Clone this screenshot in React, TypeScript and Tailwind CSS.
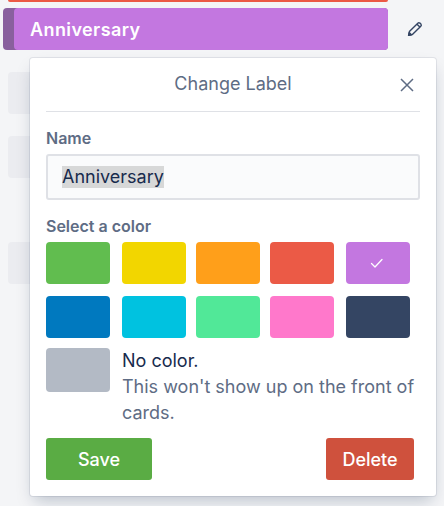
import React from "react";

const row1 = ["bg-[#61bd4f]", "bg-[#f2d600]", "bg-[#ff9f1a]", "bg-[#eb5a46]", "bg-[#c377e0]"];
const row2 = ["bg-[#0079bf]", "bg-[#00c2e0]", "bg-[#51e898]", "bg-[#ff78cb]", "bg-[#344563]"];
const gaps = ["", "ml-[12px]", "ml-[10px]", "ml-[10px]", "ml-[12px]"];

function Swatches({ colors, check, className }: { colors: string[]; check?: boolean; className?: string }) {
  return (
    <div className={"flex " + (className ?? "")}>
      {colors.map((c, i) => (
        <div key={c} className={`${c} ${gaps[i]} w-16 h-[42px] rounded-[4px] flex items-center justify-center`}>
          {check && i === 4 && (
            <svg className="-ml-[2px]" width="14" height="14" viewBox="0 0 14 14" fill="none" stroke="white" strokeWidth="1.3" strokeLinecap="round" strokeLinejoin="round">
              <path d="M1.5 7.5 L5 11 L12 3.5" />
            </svg>
          )}
        </div>
      ))}
    </div>
  );
}

export default function App() {
  return (
    <div className="relative w-[444px] h-[506px] overflow-hidden bg-[#f4f5f7] font-['Inter',sans-serif]">
      <div className="ml-2 w-[380px] h-[2px] bg-[#eb5a46] rounded-b-[3px]" />
      <div className="mt-[6px] flex items-center">
        <div className="ml-[3px] w-[385px] h-[42px] rounded-[4px] bg-[#89609e] pl-[11px]">
          <div className="h-full rounded-[4px] bg-[#c377e0] pl-4 flex items-center text-white font-semibold text-[18px] tracking-[0.4px]">
            <span>Anniversary</span>
          </div>
        </div>
        <svg className="ml-[19px]" width="16" height="16" viewBox="0 0 16 16" fill="none" stroke="#344563" strokeWidth="1.4" strokeLinejoin="round">
          <path d="M1.6 14.4 L2.4 10.6 L10.8 2.2 Q11.8 1.2 12.9 2.1 L13.9 3.1 Q14.8 4.2 13.8 5.2 L5.4 13.6 Z" />
          <path d="M10 3.2 L12.9 6.1" />
          <path d="M1.6 14.4 L2.2 11.6 L4.4 13.8 Z" fill="#344563" />
        </svg>
      </div>
      <div className="mt-[22px] ml-2 flex flex-col">
        <div className="w-[30px] h-[42px] rounded-[4px] bg-[#ebecf0]" />
        <div className="mt-[22px] w-[30px] h-[42px] rounded-[4px] bg-[#ebecf0]" />
        <div className="mt-[64px] w-[30px] h-[42px] rounded-[4px] bg-[#ebecf0]" />
      </div>

      <div className="absolute left-[30px] top-[58px] w-[406px] h-[438px] bg-white rounded-[3px] px-4 shadow-[0_8px_16px_-4px_rgba(9,30,66,0.25),0_0_0_1px_rgba(9,30,66,0.08)]">
        <div className="relative h-[54px] border-b-[1px] border-[#dfe1e6] flex items-center justify-center text-[#5e6c84] text-[18px] w-[374px]">
          <span className="-mt-[3px]">Change Label</span>
          <svg className="absolute right-[6px] top-[20px]" width="14" height="14" viewBox="0 0 14 14" fill="none" stroke="#5e6c84" strokeWidth="1.5">
            <path d="M1 1 L13 13 M13 1 L1 13" />
          </svg>
        </div>
        <div className="mt-[16px] text-[#5e6c84] font-semibold text-[16px] leading-[20px]">Name</div>
        <div className="mt-[6px] w-[374px] h-[46px] bg-[#fafbfc] border-[2px] border-[#dfe1e6] rounded-[3px] flex items-center pl-[14px] text-[#172b4d] text-[18px]">
          <span className="bg-[#d7d8d8] leading-[22px] h-[22px]">Anniversary</span>
        </div>
        <div className="mt-[16px] text-[#5e6c84] font-semibold text-[16px] leading-[20px]">Select a color</div>
        <Swatches colors={row1} check className="mt-[6px]" />
        <Swatches colors={row2} className="mt-3" />
        <div className="mt-[10px] flex">
          <div className="w-16 h-[44px] rounded-[4px] bg-[#b3bac5] shrink-0" />
          <div className="ml-3 w-[300px] text-[18px] leading-[26px] -mr-2">
            <div className="text-[#172b4d]">No color.</div>
            <div className="text-[#5e6c84]">This won't show up on the front of cards.</div>
          </div>
        </div>
        <div className="mt-[12px] flex justify-between w-[368px]">
          <button className="w-[106px] h-[42px] rounded-[3px] bg-[#5aac44] text-white text-[18px] font-medium">Save</button>
          <button className="w-[88px] h-[42px] rounded-[3px] bg-[#cf513d] text-white text-[18px] font-medium">Delete</button>
        </div>
      </div>
    </div>
  );
}
